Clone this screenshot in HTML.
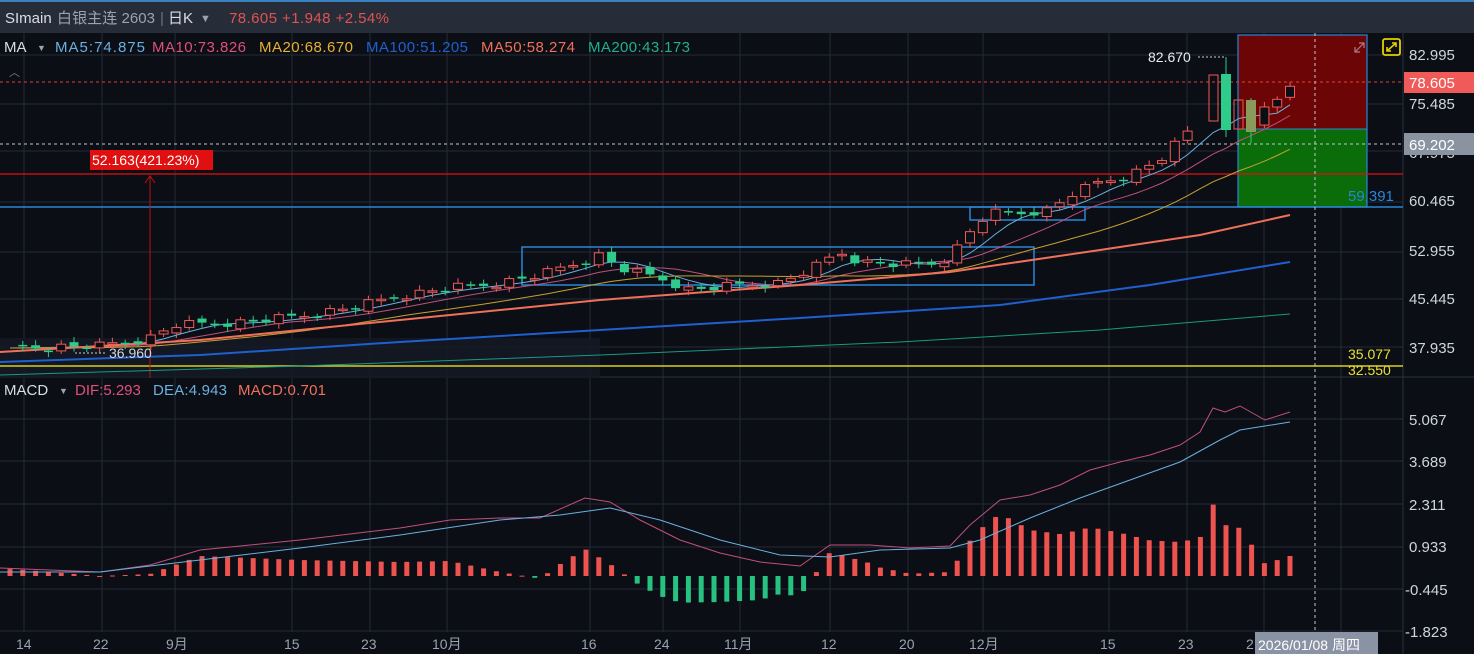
<!DOCTYPE html>
<html><head><meta charset="utf-8"><style>
html,body{margin:0;padding:0;background:#0b0e15;width:1474px;height:654px;overflow:hidden;font-family:"Liberation Sans","Noto Sans CJK SC",sans-serif}
svg{display:block}
text{font-family:"Liberation Sans","Noto Sans CJK SC",sans-serif}
</style></head><body>
<svg id="s" width="1474" height="654" xmlns="http://www.w3.org/2000/svg">
<rect x="0" y="0" width="1474" height="654" fill="#0b0e15"/>
<rect x="0" y="0" width="1474" height="33" fill="#262d39"/>
<rect x="0" y="0" width="1474" height="2" fill="#3a7fbf"/>
<text x="5" y="23" font-size="15" fill="#d8dde6">SImain</text>
<text x="57" y="23" font-size="15" fill="#9aa3b0" textLength="98">白银主连 2603</text>
<text x="160" y="23" font-size="15" fill="#6a7380">|</text>
<text x="168" y="23" font-size="15" fill="#d8dde6">日K</text>
<text x="200" y="22" font-size="11" fill="#9aa3b0">▼</text>
<text x="229" y="23" font-size="15" fill="#e0534f" textLength="160">78.605 +1.948 +2.54%</text>
<g id="grid" stroke="#232b36" stroke-width="1"></g>
<line x1="1403" y1="33" x2="1403" y2="654" stroke="#2a323e"/>
<line x1="0" y1="377" x2="1474" y2="377" stroke="#2a323e"/>
<rect x="0" y="338" width="600" height="40" fill="#141a24" opacity="0.8"/>
<rect x="1238" y="35" width="129" height="94" fill="#6c0606"/>
<rect x="1238" y="129" width="129" height="78" fill="#0a6d0a"/>
<rect x="1238" y="35" width="129" height="172" fill="none" stroke="#2a86d6" stroke-width="1.2"/>
<line x1="1238" y1="129" x2="1367" y2="129" stroke="#2a86d6"/>
<line x1="0" y1="207" x2="1403" y2="207" stroke="#2a86d6" stroke-width="1.5"/>
<line x1="0" y1="174" x2="1403" y2="174" stroke="#e01010" stroke-width="1.2"/>
<line x1="0" y1="366" x2="1403" y2="366" stroke="#d8d020" stroke-width="1.5"/>
<line x1="0" y1="82" x2="1403" y2="82" stroke="#e0403c" stroke-dasharray="3,3"/>
<line x1="0" y1="144" x2="1403" y2="144" stroke="#c0c6d0" stroke-dasharray="3,3"/>
<line x1="1315" y1="33" x2="1315" y2="654" stroke="#c0c6d0" stroke-dasharray="3,3"/>
<rect x="522" y="247" width="512" height="38" fill="none" stroke="#2a86d6" stroke-width="1.5"/>
<rect x="970" y="207" width="115" height="13" fill="none" stroke="#2a86d6" stroke-width="1.5"/>
<line x1="150" y1="176" x2="150" y2="378" stroke="#c01010"/>
<path d="M145 183 L150 176 L155 183" fill="none" stroke="#c01010"/>
<rect x="90" y="150" width="123" height="20" fill="#e01010"/>
<text x="92" y="165" font-size="14" fill="#fff">52.163(421.23%)</text>
<g id="ma" fill="none"></g>
<g id="cd"></g>
<g id="mc"></g>
<text x="1148" y="62" font-size="14" fill="#e8ecf2">82.670</text>
<line x1="1198" y1="57" x2="1226" y2="57" stroke="#ccc" stroke-dasharray="2,2"/>
<text x="109" y="358" font-size="14" fill="#d0d5dc">36.960</text>
<line x1="75" y1="353" x2="106" y2="353" stroke="#ccc" stroke-dasharray="2,2"/>
<g font-size="15">
<text x="4" y="52" fill="#d8dde6">MA</text><text x="37" y="51" font-size="9" fill="#9aa3b0">▼</text>
<text x="55" y="52" fill="#6ab0e0" textLength="90">MA5:74.875</text>
<text x="152" y="52" fill="#e0507a" textLength="94">MA10:73.826</text>
<text x="259" y="52" fill="#e8b030" textLength="94">MA20:68.670</text>
<text x="366" y="52" fill="#2060d0" textLength="102">MA100:51.205</text>
<text x="481" y="52" fill="#f0705a" textLength="94">MA50:58.274</text>
<text x="588" y="52" fill="#20b090" textLength="102">MA200:43.173</text>
<text x="4" y="395" fill="#d8dde6">MACD</text><text x="59" y="394" font-size="9" fill="#9aa3b0">▼</text>
<text x="75" y="395" fill="#e0507a">DIF:5.293</text>
<text x="153" y="395" fill="#6ab0e0" textLength="74">DEA:4.943</text>
<text x="238" y="395" fill="#f0705a" textLength="88">MACD:0.701</text>
</g>
<text x="9" y="76" font-size="11" fill="#7a8390">︿</text>
<path d="M1355 52 L1364 43 M1359 43 L1364 43 L1364 48 M1355 47 L1355 52 L1360 52" stroke="#b07a90" stroke-width="1.2" fill="none"/>
<rect x="1383" y="39" width="17" height="16" rx="2" fill="none" stroke="#e8d000" stroke-width="1.8"/>
<path d="M1387 51 L1396 43 M1392 43 L1396 43 L1396 47 M1387 47 L1387 51 L1391 51" stroke="#e8d000" stroke-width="1.6" fill="none"/>
<g font-size="15" fill="#d0d5dc">
<text x="1409" y="60">82.995</text>
<text x="1409" y="109">75.485</text>
<text x="1409" y="158">67.975</text>
<text x="1409" y="206">60.465</text>
<text x="1409" y="256">52.955</text>
<text x="1409" y="304">45.445</text>
<text x="1409" y="353">37.935</text>
<text x="1409" y="425">5.067</text>
<text x="1409" y="467">3.689</text>
<text x="1409" y="510">2.311</text>
<text x="1409" y="552">0.933</text>
<text x="1405" y="595">-0.445</text>
<text x="1405" y="637">-1.823</text>
</g>
<rect x="1404" y="72" width="70" height="21" fill="#f05a58"/>
<text x="1409" y="88" font-size="15" fill="#fff">78.605</text>
<rect x="1404" y="133" width="70" height="22" fill="#8a93a0"/>
<text x="1409" y="150" font-size="15" fill="#fff">69.202</text>
<text x="1348" y="201" font-size="15" fill="#2a86d6">59.391</text>
<text x="1348" y="359" font-size="14" fill="#e8e030">35.077</text>
<text x="1348" y="375" font-size="14" fill="#e8e030">32.550</text>
<g font-size="14" fill="#9aa3b0">
<text x="16" y="649">14</text><text x="93" y="649">22</text><text x="166" y="649">9月</text>
<text x="284" y="649">15</text><text x="361" y="649">23</text><text x="432" y="649">10月</text>
<text x="581" y="649">16</text><text x="654" y="649">24</text><text x="724" y="649">11月</text>
<text x="821" y="649">12</text><text x="899" y="649">20</text><text x="969" y="649">12月</text>
<text x="1100" y="649">15</text><text x="1178" y="649">23</text><text x="1246" y="649">2</text>
</g>
<rect x="1255" y="632" width="123" height="22" fill="#8a93a3"/>
<text x="1258" y="650" font-size="14" fill="#fff">2026/01/08 周四</text>
</svg>
<script>
(function(){
var NS="http://www.w3.org/2000/svg";
function el(p,t,a){var e=document.createElementNS(NS,t);for(var k in a)e.setAttribute(k,a[k]);p.appendChild(e);return e;}
var g=document.getElementById('grid');
[24,102,175,292,370,447,590,663,740,830,908,983,1109,1187,1264,1341].forEach(function(x){el(g,'line',{x1:x,y1:33,x2:x,y2:632});});
[55,104,151,202,252,299,347,419,461,504,547,589,631].forEach(function(y){el(g,'line',{x1:0,y1:y,x2:1403,y2:y});});
function interp(pts,x){if(x<=pts[0][0])return pts[0][1];for(var i=1;i<pts.length;i++){if(x<=pts[i][0]){var a=pts[i-1],b=pts[i];return a[1]+(b[1]-a[1])*(x-a[0])/(b[0]-a[0]);}}return pts[pts.length-1][1];}
var CL=[[0,348],[100,346],[150,338],[175,325],[250,322],[300,316],[350,308],[400,296],[450,288],[500,283],[540,275],[580,262],[600,255],[625,270],[660,278],[690,290],[740,285],[780,283],[810,270],[840,252],[860,262],[900,265],[940,263],[960,245],[975,225],[990,213],[1020,213],[1050,210],[1070,195],[1100,182],[1130,175],[1160,160],[1190,130],[1210,105],[1225,128],[1240,105],[1255,125],[1265,110],[1278,100],[1290,85]];
var xs=[];for(var x=1290;x>=0;x-=12.8)xs.unshift(x);
var cs=xs.map(function(x,i){return interp(CL,x)+((i*37)%7-3)*1.3;});
var cd=document.getElementById('cd');
for(var i=1;i<xs.length;i++){
 var x=xs[i];if(x>1200&&x<1260)continue;
 var c=cs[i],o=cs[i-1]+((i*53)%5-2);
 var up=c<o;var col=up?'#f05a58':'#2ecb8a';
 var top=Math.min(o,c),h=Math.max(Math.abs(o-c),1.5);
 el(cd,'line',{x1:x,y1:top-3-(i%3),x2:x,y2:top+h+3+(i%2)*2,stroke:col});
 if(up)el(cd,'rect',{x:x-4.5,y:top,width:9,height:h,fill:'#0b0e15',stroke:col});
 else el(cd,'rect',{x:x-4.5,y:top,width:9,height:h,fill:col});
}
el(cd,'rect',{x:1209,y:75,width:9,height:46,fill:'none',stroke:'#f05a58'});
el(cd,'line',{x1:1226,y1:57,x2:1226,y2:137,stroke:'#2ecb8a'});
el(cd,'rect',{x:1221,y:74,width:10,height:56,fill:'#2ecb8a'});
el(cd,'rect',{x:1234,y:100,width:9,height:29,fill:'none',stroke:'#f05a58'});
el(cd,'line',{x1:1251,y1:98,x2:1251,y2:143,stroke:'#2ecb8a'});
el(cd,'rect',{x:1246,y:100,width:10,height:32,fill:'#8a9a5a'});
var ma=document.getElementById('ma');
function pl(pts,col,w){el(ma,'polyline',{points:pts.map(function(p){return p[0].toFixed(1)+','+p[1].toFixed(1)}).join(' '),stroke:col,'stroke-width':w||1});}
function avg(x,n){var s=0;for(var k=0;k<n;k++)s+=interp(CL,Math.max(0,x-k*12.8));return s/n;}
pl(xs.map(function(x){return [x,avg(x,5)]}),'#6ab0e0',1);
pl(xs.map(function(x){return [x,avg(x,10)]}),'#c0507a',1);
pl(xs.map(function(x){return [x,avg(x,20)]}),'#c8a030',1);
pl([[0,352],[200,340],[400,320],[600,300],[800,285],[950,272],[1100,250],[1200,235],[1290,215]],'#f0705a',2);
pl([[0,362],[200,355],[400,342],[600,330],[800,318],[1000,305],[1150,285],[1290,262]],'#1f5fd0',2);
pl([[0,375],[300,366],[600,355],[900,342],[1100,330],[1290,314]],'#1a9a80',1);
var dif=[[0,568],[100,572],[150,565],[200,550],[300,540],[400,528],[450,520],[500,518],[540,518],[585,498],[610,502],[640,520],[680,540],[720,553],[760,562],[800,566],[830,545],[870,545],[910,548],[950,546],[970,525],[1000,500],[1030,495],[1060,485],[1090,470],[1120,462],[1150,455],[1180,445],[1200,432],[1213,408],[1225,412],[1240,406],[1265,420],[1290,412]];
var dea=[[0,572],[100,572],[200,560],[300,548],[400,535],[500,520],[560,515],[610,508],[660,520],[720,540],[780,555],[830,557],[880,550],[950,548],[980,540],[1030,518],[1080,498],[1130,480],[1180,462],[1220,440],[1240,430],[1290,422]];
var mc=document.getElementById('mc');
xs.forEach(function(x){var v=(interp(dea,x)-interp(dif,x))*2;var z=576;
 if(v>=0)el(mc,'rect',{x:x-2.5,y:z-v,width:5,height:Math.max(v,1),fill:'#ef5350'});
 else el(mc,'rect',{x:x-2.5,y:z,width:5,height:-v,fill:'#26c281'});});
el(mc,'polyline',{points:dif.map(function(p){return p.join(',')}).join(' '),stroke:'#c0507a',fill:'none'});
el(mc,'polyline',{points:dea.map(function(p){return p.join(',')}).join(' '),stroke:'#6ab0e0',fill:'none'});
})();
</script>
</body></html>
